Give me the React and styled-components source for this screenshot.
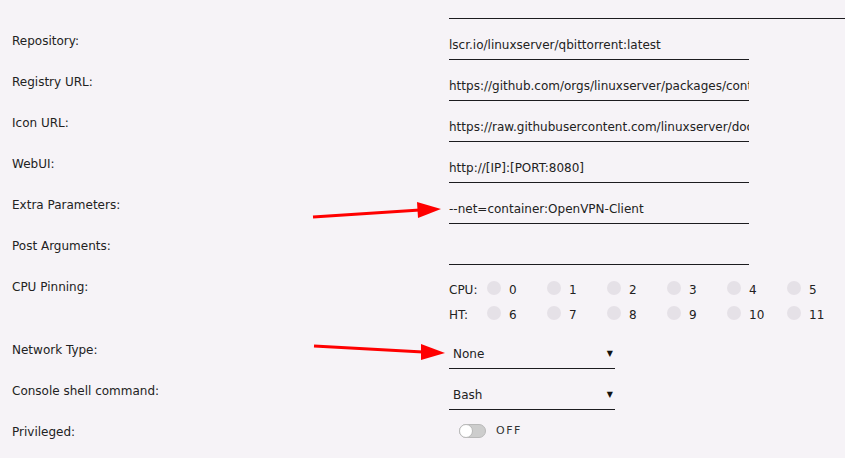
import React from 'react';
import styled, { createGlobalStyle } from 'styled-components';

const GlobalStyle = createGlobalStyle`
  html, body {
    margin: 0;
    background: #f6f3f7;
  }
  body {
    font-family: "DejaVu Sans", "Noto Sans", sans-serif;
    font-size: 12px;
    color: #222;
    overflow: hidden;
  }
`;

const Page = styled.div`
  position: relative;
  width: 845px;
  height: 458px;
  overflow: hidden;
`;

const Form = styled.div`
  display: flex;
  flex-direction: column;
`;

// bottom edge of the field scrolled above the view
const TopEdge = styled.div`
  height: 18px;
  margin: 0 0 4px 449px;
  border-bottom: 1px solid #1c1b1f;
`;

const Row = styled.div`
  display: flex;
  height: ${(p) => p.$height || 41}px;
`;

const Label = styled.div`
  box-sizing: border-box;
  flex-shrink: 0;
  width: 449px;
  padding: 9px 0 0 12px;
  line-height: 18px;
`;

const TextInput = styled.input`
  margin: 13px 0 0;
  height: 18px;
  width: 300px;
  padding: 0 0 5px;
  border: none;
  border-bottom: 1px solid #1c1b1f;
  background: transparent;
  font: inherit;
  line-height: 18px;
  color: #222;
  outline: none;
`;

const Select = styled.div`
  box-sizing: border-box;
  display: flex;
  justify-content: space-between;
  align-items: center;
  margin-top: 13px;
  width: 166px;
  height: 24px;
  padding: 0 2px 5px 4px;
  border-bottom: 1px solid #1c1b1f;
  line-height: 18px;
`;

const Caret = styled.span`
  font-size: 8px;
  color: #111;
`;

const PinGrid = styled.div`
  display: grid;
  grid-template-columns: 38px repeat(6, 60px);
  grid-auto-rows: 25px;
  align-items: center;
  flex-shrink: 0;
  margin-top: 8px;
  line-height: 18px;
`;

const PinCell = styled.label`
  display: flex;
  align-items: center;
  gap: 8px;
`;

const PinDot = styled.span`
  width: 14px;
  height: 14px;
  margin-bottom: 4px;
  border-radius: 50%;
  background: #e5e1e7;
`;

const SwitchWrap = styled.div`
  display: flex;
  align-items: center;
  gap: 10px;
  margin: 9px 0 0 10px;
  height: 15px;
`;

const Track = styled.span`
  position: relative;
  box-sizing: border-box;
  width: 27px;
  height: 14px;
  border-radius: 7px;
  border: 1px solid #b9b9b9;
  background: #cdcdcd;
`;

const Knob = styled.span`
  position: absolute;
  left: -1px;
  top: -1px;
  box-sizing: border-box;
  width: 14px;
  height: 14px;
  border-radius: 50%;
  border: 1px solid #b9b9b9;
  background: #fff;
`;

const SwitchText = styled.span`
  font-size: 11px;
  letter-spacing: 1.5px;
  color: #333;
`;

const Annotations = styled.svg`
  position: absolute;
  inset: 0;
  pointer-events: none;
`;

const fields = [
  ['Repository:', 'lscr.io/linuxserver/qbittorrent:latest'],
  ['Registry URL:', 'https://github.com/orgs/linuxserver/packages/container/package/qbittorrent'],
  ['Icon URL:', 'https://raw.githubusercontent.com/linuxserver/docker-templates/master/linuxserver.io/img/qbittorrent-logo.png'],
  ['WebUI:', 'http://[IP]:[PORT:8080]'],
  ['Extra Parameters:', '--net=container:OpenVPN-Client'],
  ['Post Arguments:', ''],
];

const cpuRows = [
  ['CPU:', [0, 1, 2, 3, 4, 5]],
  ['HT:', [6, 7, 8, 9, 10, 11]],
];

export default function App() {
  return (
    <Page>
      <GlobalStyle />
      <Form>
        <TopEdge />
        {fields.map(([label, value]) => (
          <Row key={label}>
            <Label>{label}</Label>
            <TextInput readOnly value={value} />
          </Row>
        ))}
        <Row $height={63}>
          <Label>CPU Pinning:</Label>
          <PinGrid>
            {cpuRows.map(([name, cores]) => (
              <React.Fragment key={name}>
                <span>{name}</span>
                {cores.map((c) => (
                  <PinCell key={c}>
                    <PinDot />
                    {c}
                  </PinCell>
                ))}
              </React.Fragment>
            ))}
          </PinGrid>
        </Row>
        <Row>
          <Label>Network Type:</Label>
          <Select>
            None<Caret>▼</Caret>
          </Select>
        </Row>
        <Row>
          <Label>Console shell command:</Label>
          <Select>
            Bash<Caret>▼</Caret>
          </Select>
        </Row>
        <Row>
          <Label>Privileged:</Label>
          <SwitchWrap>
            <Track>
              <Knob />
            </Track>
            <SwitchText>OFF</SwitchText>
          </SwitchWrap>
        </Row>
      </Form>
      <Annotations width="845" height="458">
        <g fill="#ff0000" stroke="#ff0000">
          <line x1="313" y1="217" x2="420" y2="210" strokeWidth="3" />
          <polygon points="417,202 441,209 418,218" stroke="none" />
          <line x1="314" y1="346" x2="423" y2="352" strokeWidth="3" />
          <polygon points="421,344 445,353 421,360" stroke="none" />
        </g>
      </Annotations>
    </Page>
  );
}
